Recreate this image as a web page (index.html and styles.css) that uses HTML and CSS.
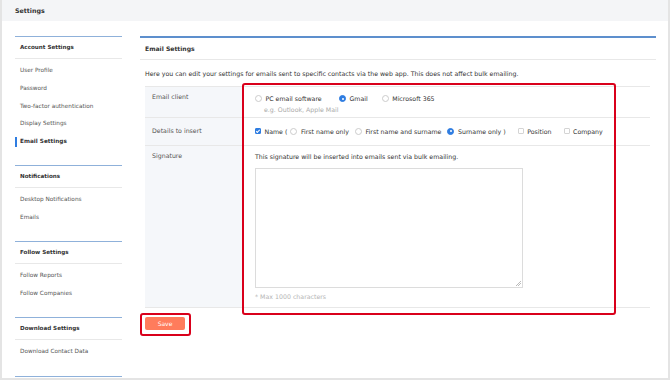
FILE: index.html
```html
<!DOCTYPE html>
<html>
<head>
<meta charset="utf-8">
<link rel="stylesheet" href="styles.css">
</head>
<body>
<div class="frame">
  <div class="topbar">Settings</div>
  <div class="layout">
    <nav class="sidebar">
      <section class="side-sec">
        <div class="side-title">Account Settings</div>
        <ul class="side-list">
          <li>User Profile</li>
          <li>Password</li>
          <li>Two-factor authentication</li>
          <li>Display Settings</li>
          <li class="active">Email Settings</li>
        </ul>
      </section>
      <section class="side-sec">
        <div class="side-title">Notifications</div>
        <ul class="side-list">
          <li>Desktop Notifications</li>
          <li>Emails</li>
        </ul>
      </section>
      <section class="side-sec">
        <div class="side-title">Follow Settings</div>
        <ul class="side-list">
          <li>Follow Reports</li>
          <li>Follow Companies</li>
        </ul>
      </section>
      <section class="side-sec">
        <div class="side-title">Download Settings</div>
        <ul class="side-list">
          <li>Download Contact Data</li>
        </ul>
      </section>
      <section class="side-sec side-end"></section>
    </nav>
    <main class="main">
      <div class="main-title">Email Settings</div>
      <p class="desc">Here you can edit your settings for emails sent to specific contacts via the web app. This does not affect bulk emailing.</p>
      <div class="table">
        <div class="row row-client">
          <div class="label">Email client</div>
          <div class="cell">
            <div class="opts client">
              <div class="opt-group">
                <label class="opt"><span class="radio"></span>PC email software</label>
                <div class="hint">e.g. Outlook, Apple Mail</div>
              </div>
              <label class="opt"><span class="radio on"></span>Gmail</label>
              <label class="opt"><span class="radio"></span>Microsoft 365</label>
            </div>
          </div>
        </div>
        <div class="row row-details">
          <div class="label">Details to insert</div>
          <div class="cell">
            <div class="opts details">
              <div class="name-group">
                <label class="opt"><span class="check on"></span>Name (</label>
                <label class="opt"><span class="radio"></span>First name only</label>
                <label class="opt"><span class="radio"></span>First name and surname</label>
                <label class="opt"><span class="radio on"></span>Surname only )</label>
              </div>
              <label class="opt"><span class="check"></span>Position</label>
              <label class="opt"><span class="check"></span>Company</label>
            </div>
          </div>
        </div>
        <div class="row row-sig">
          <div class="label">Signature</div>
          <div class="cell">
            <div class="sig-note">This signature will be inserted into emails sent via bulk emailing.</div>
            <div class="textarea"><span class="grip"></span></div>
            <div class="max">* Max 1000 characters</div>
          </div>
        </div>
      </div>
      <div class="actions">
        <button class="save">Save</button>
      </div>
      <div class="hl hl-form"></div>
      <div class="hl hl-save"></div>
    </main>
  </div>
</div>
</body>
</html>
```

FILE: styles.css
```css
* { box-sizing: border-box; }
html, body { margin: 0; padding: 0; background: #fff; }
body {
  font-family: "DejaVu Sans", Verdana, sans-serif;
  font-size: 6.25px;
  color: #333;
}
.frame {
  width: 670px;
  height: 380px;
  overflow: hidden;
  border-left: 2px solid #e4e4e4;
  border-right: 2px solid #e4e4e4;
  border-bottom: 2px solid #e4e4e4;
}
.topbar {
  height: 21px;
  line-height: 21px;
  background: #f4f5f7;
  padding-left: 13px;
  font-weight: bold;
  font-size: 6.3px;
  color: #333;
}
.layout {
  display: flex;
  padding: 15px 12px 0 13px;
  gap: 18px;
}
.sidebar { width: 107px; flex: none; font-size: 5.75px; }
.side-sec {
  border-top: 1px solid #8fb1da;
  margin-bottom: 14.5px;
}
.side-title {
  height: 22px;
  line-height: 21px;
  padding-left: 5px;
  font-weight: bold;
  font-size: 5.6px;
  color: #333;
  border-bottom: 1px solid #e8e8e8;
}
.side-end { height: 10px; }
.side-list {
  list-style: none;
  margin: 0;
  padding: 3px 0 0;
}
.side-list li {
  height: 17.75px;
  line-height: 17.75px;
  padding-left: 5px;
  color: #555;
  position: relative;
}
.side-list li.active {
  font-weight: bold;
  color: #333;
}
.side-list li.active::before {
  content: "";
  position: absolute;
  left: 0;
  top: 4px;
  width: 2px;
  height: 10px;
  background: #2f7de1;
}
.main {
  flex: 1;
  position: relative;
  border-top: 2px solid #5d8fcd;
}
.main-title {
  height: 22px;
  line-height: 21px;
  padding-left: 5px;
  font-weight: bold;
  font-size: 6.1px;
  border-bottom: 1px solid #e8e8e8;
}
.desc {
  margin: 9px 0 0 5px;
  line-height: 10px;
  height: 10px;
}
.table {
  margin: 7px 6px 0 5px;
  border-top: 1px solid #e8e8e8;
  border-bottom: 1px solid #e8e8e8;
}
.row {
  display: flex;
  border-top: 1px solid #e8e8e8;
}
.row:first-child { border-top: none; }
.label {
  width: 98px;
  flex: none;
  background: #f5f7fa;
  padding: 5px 7px;
  line-height: 10px;
  color: #555;
}
.cell {
  flex: 1;
  padding: 6px 12px;
  line-height: 11px;
}
.row-client { height: 30px; }
.row-details { height: 28px; }
.row-details .label { padding-top: 8px; }
.row-details .cell { padding-top: 7.5px; }
.row-sig { height: 162px; }
.row-sig .label { padding-top: 5px; }
.row-sig .cell { padding-top: 4.5px; }
.opts {
  display: flex;
  align-items: flex-start;
}
.opts.client .opt-group { width: 84px; flex: none; }
.opts.client .opt + .opt { margin-left: 14px; }
.opts.details { gap: 12px; }
.name-group {
  display: flex;
  gap: 6px;
}
.name-group .opt:first-child { margin-right: -3px; }
.opt {
  display: flex;
  align-items: center;
  gap: 3.5px;
  white-space: nowrap;
}
.hint {
  color: #aaa;
  padding-left: 9px;
  white-space: nowrap;
}
.radio {
  width: 7px;
  height: 7px;
  border-radius: 50%;
  border: 1px solid #cccccc;
  background: #fff;
  flex: none;
  position: relative;
}
.radio.on {
  border-color: #2f7de1;
  background: #2f7de1;
}
.radio.on::after {
  content: "";
  position: absolute;
  left: 1.5px;
  top: 1.5px;
  width: 2px;
  height: 2px;
  border-radius: 50%;
  background: #fff;
}
.check {
  width: 6px;
  height: 6px;
  border-radius: 1px;
  border: 1px solid #d4d4d4;
  background: #fff;
  flex: none;
  position: relative;
}
.check.on {
  border-color: #2f7de1;
  background: #2f7de1;
}
.check.on::after {
  content: "";
  position: absolute;
  left: 1.2px;
  top: 0;
  width: 1.4px;
  height: 2.8px;
  border: solid #fff;
  border-width: 0 1px 1px 0;
  transform: rotate(45deg);
}
.sig-note {
  line-height: 11px;
}
.textarea {
  margin-top: 6px;
  width: 268px;
  height: 120px;
  border: 1px solid #dcdcdc;
  position: relative;
}
.grip {
  position: absolute;
  right: 1px;
  bottom: 1px;
  width: 5px;
  height: 5px;
  background: linear-gradient(135deg, transparent 45%, #bbb 45%, #bbb 55%, transparent 55%, transparent 70%, #bbb 70%, #bbb 80%, transparent 80%);
}
.max {
  margin-top: 3px;
  color: #b5b5b5;
}
.actions {
  padding: 9px 0 0 5px;
}
.save {
  width: 40px;
  height: 13px;
  border: none;
  border-radius: 2px;
  background: #ff7c5c;
  color: #fff;
  font-family: inherit;
  font-size: 6px;
  padding: 0;
}
.hl {
  position: absolute;
  border: 2px solid #d9001b;
  border-radius: 3px;
}
.hl-form {
  left: 102px;
  top: 45px;
  width: 374px;
  height: 232px;
}
.hl-save {
  left: 0;
  top: 275px;
  width: 51px;
  height: 23px;
}
```
